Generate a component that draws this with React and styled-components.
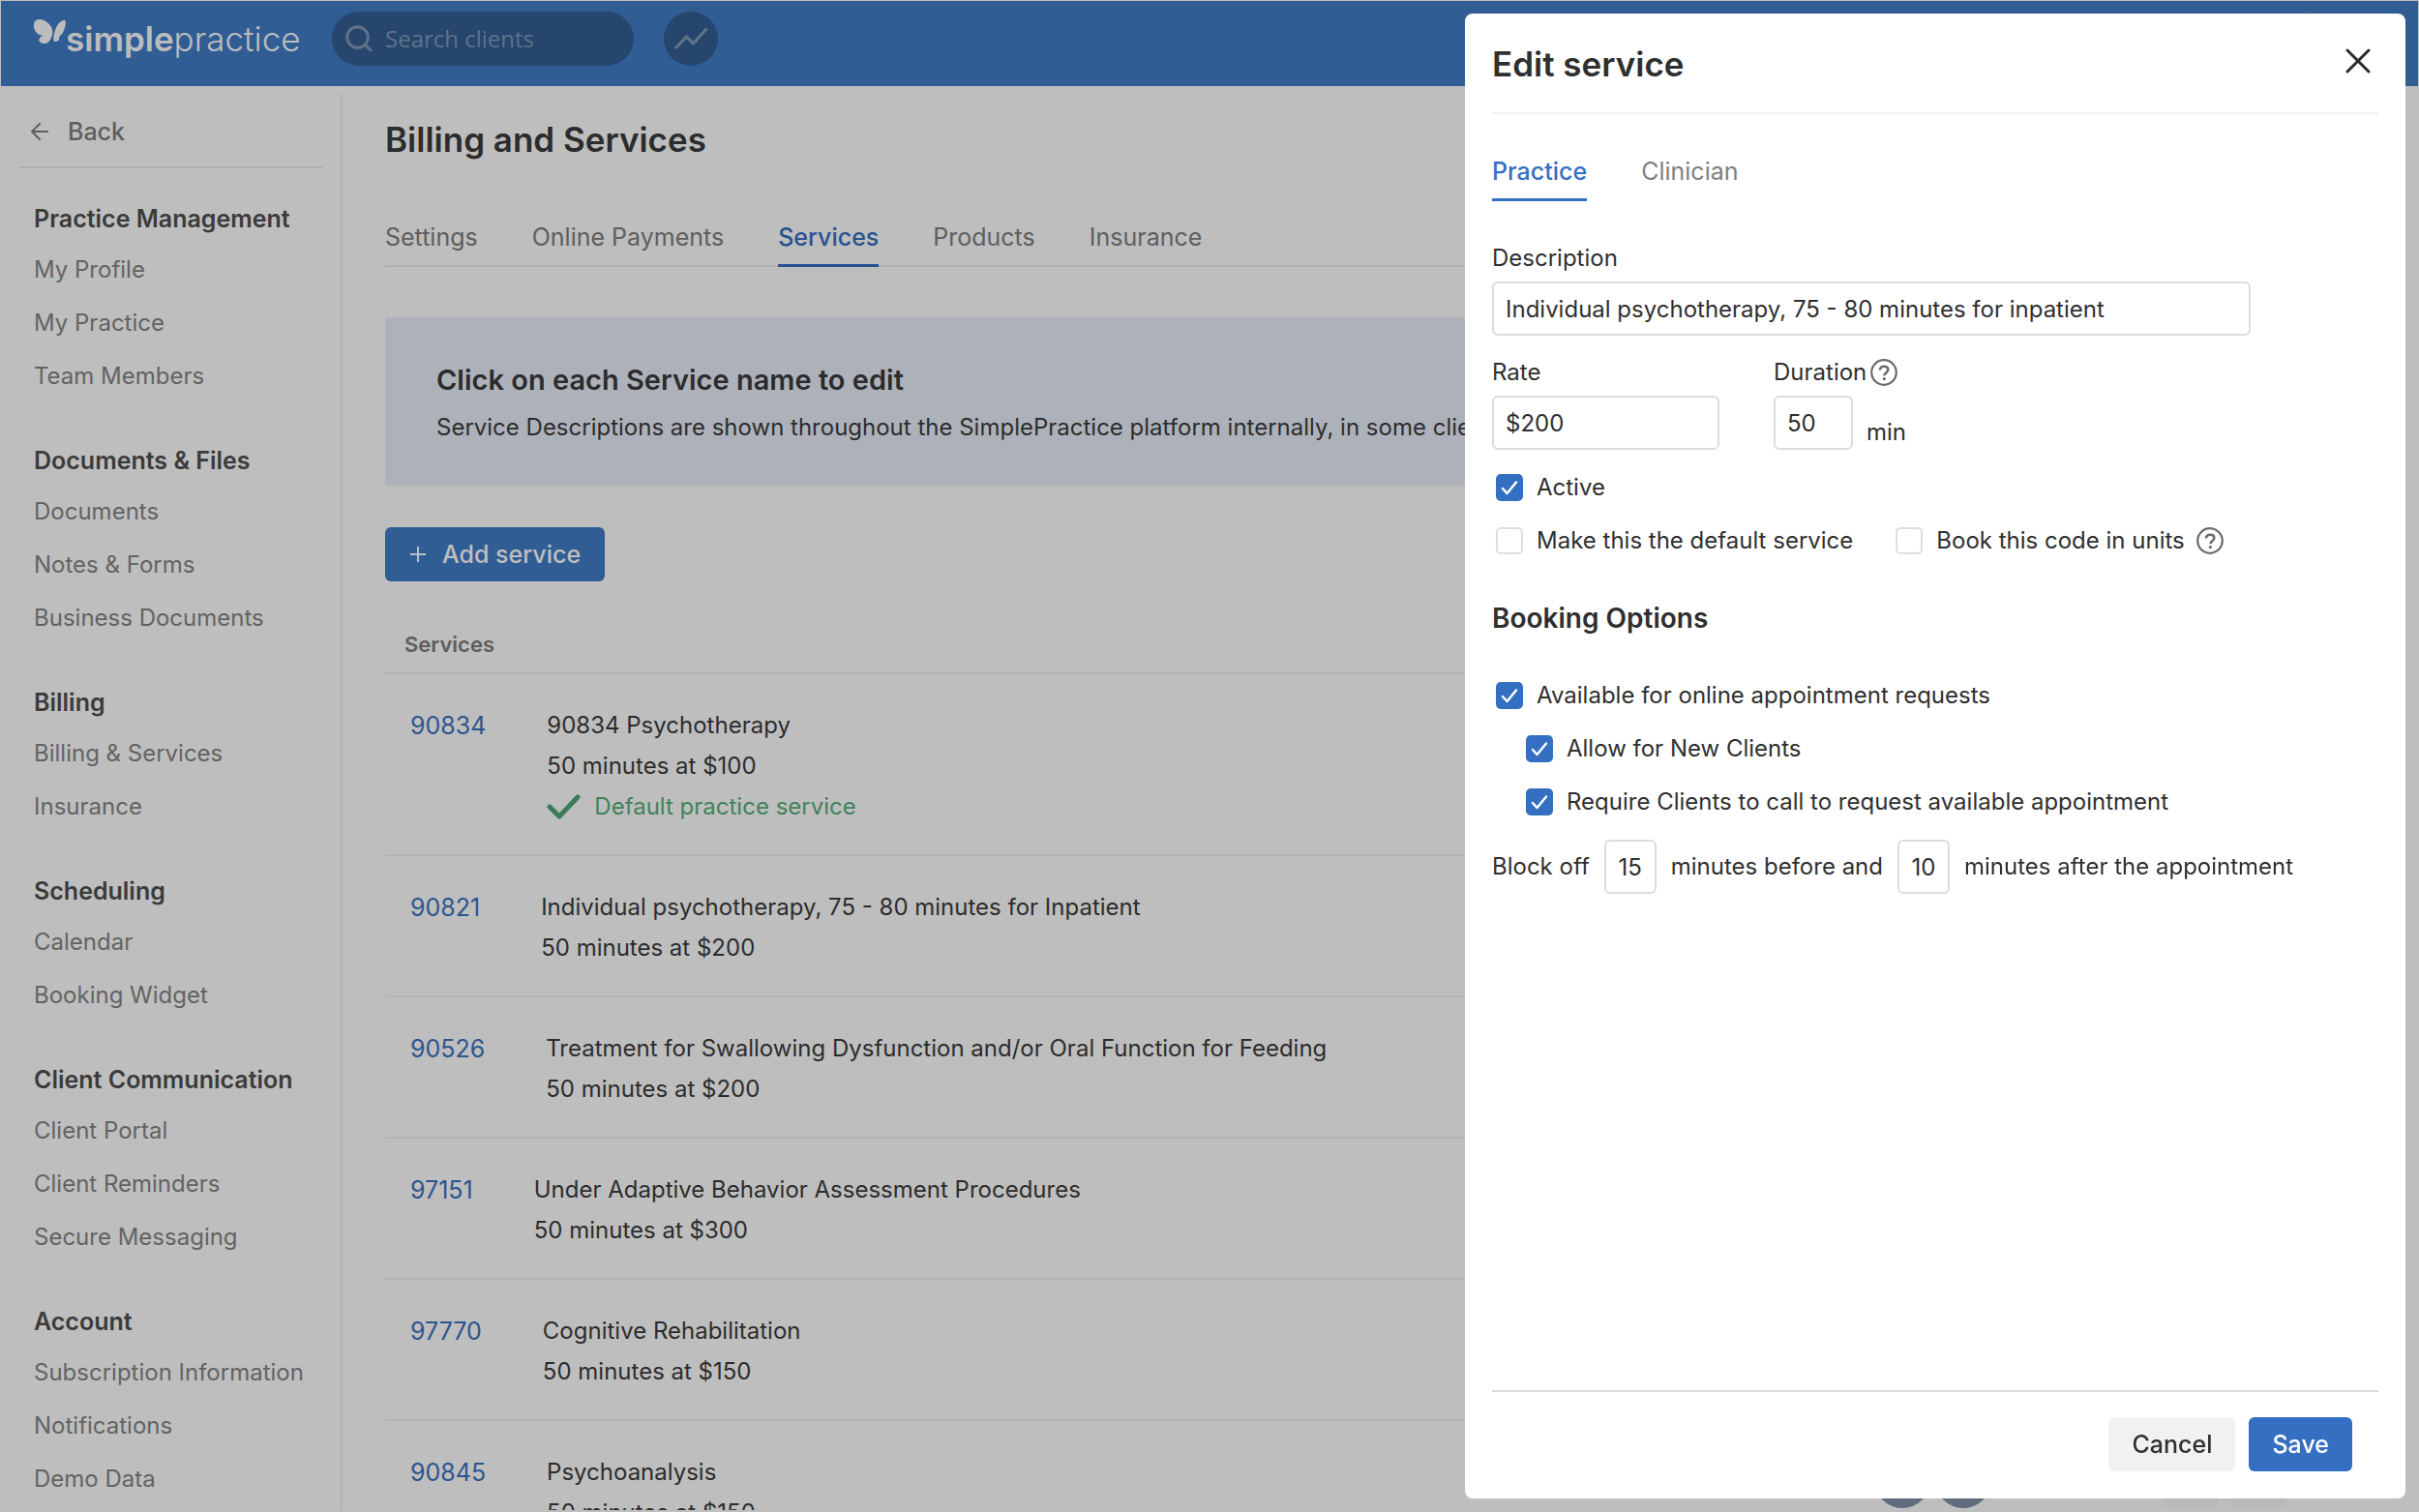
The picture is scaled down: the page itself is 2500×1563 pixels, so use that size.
import React, { useState } from 'react';
import styled, { createGlobalStyle, css } from 'styled-components';

const blue = '#356fc2';
const headerBlue = '#3f7dc7';

const GlobalStyle = createGlobalStyle`
  *, *::before, *::after {
    box-sizing: border-box;
  }

  body {
    margin: 0;
    background: #fff;
    color: #3c3c3c;
    font-family: Inter, 'Liberation Sans', sans-serif;
    font-size: 24px;
    line-height: 42px;
  }

  button, input, table {
    font: inherit;
    color: inherit;
  }

  h1, h2, h3, p, ul {
    margin: 0;
    padding: 0;
  }

  a {
    color: inherit;
    text-decoration: none;
  }
`;

const Page = styled.div`
  display: flex;
  flex-direction: column;
  height: 100vh;
  overflow: hidden;
  border: 1px solid #fff;
  border-bottom-width: 2px;
`;

const Header = styled.header`
  display: flex;
  flex: none;
  align-items: flex-start;
  gap: 31px;
  height: 88px;
  padding: 11px 112px 0 33px;
  background: ${headerBlue};
`;

const Logo = styled.a`
  display: flex;
  width: 278px;
  height: 56px;
  color: #fdfdfd;
  font-size: 35px;
  line-height: 56px;

  svg {
    flex: none;
    width: 34px;
    height: 26px;
    margin-top: 8px;
  }

  strong {
    font-weight: 600;
  }

  span {
    font-weight: 300;
  }
`;

const SearchBox = styled.label`
  display: flex;
  align-items: center;
  gap: 13px;
  width: 312px;
  height: 56px;
  padding: 0 14px;
  border-radius: 28px;
  background: #335e93;

  svg {
    flex: none;
    width: 28px;
    height: 28px;
  }

  input {
    width: 100%;
    min-width: 0;
    padding: 0;
    border: 0;
    outline: 0;
    background: none;
    font-family: 'Open Sans', sans-serif;
    font-size: 24px;
  }

  input::placeholder {
    color: #8199b8;
    opacity: 1;
  }
`;

const RoundButton = styled.button`
  display: flex;
  align-items: center;
  justify-content: center;
  width: 56px;
  height: 56px;
  padding: 0;
  border: 0;
  border-radius: 50%;
  background: #335e93;

  svg {
    width: 36px;
    height: 28px;
  }
`;

const HeaderDivider = styled.span`
  width: 1px;
  height: 56px;
  margin-left: auto;
  background: #6a98d0;
`;

const Body = styled.div`
  display: flex;
  flex: 1;
  min-height: 0;
`;

const Sidebar = styled.aside`
  flex: none;
  width: 353px;
  margin-top: 8px;
  border-right: 2px solid #efefef;
`;

const BackLink = styled.a`
  display: flex;
  align-items: center;
  gap: 20px;
  height: 77px;
  margin: 0 19px;
  padding: 2px 12px 0;
  border-bottom: 2px solid #e9e9e9;
  color: #7f7f7f;
  font-size: 25px;
  font-weight: 500;

  svg {
    width: 18px;
    height: 20px;
  }
`;

const Nav = styled.nav`
  padding: 27px 0 0 34px;
`;

const NavGroup = styled.section`
  margin-bottom: 35px;

  h2 {
    color: #505050;
    font-size: 25px;
    font-weight: 600;
    line-height: 50px;
  }

  ul {
    list-style: none;
  }

  li {
    color: #868686;
    line-height: 55px;
  }
`;

const Main = styled.main`
  flex: 1;
  min-width: 0;
  padding: 33px 44px 0;
`;

const PageTitle = styled.h1`
  font-size: 35px;
  font-weight: 600;
  line-height: 44px;
`;

const Tabs = styled.div`
  display: flex;
  gap: 56px;
  margin-bottom: 37px;

  ${({ $line }) =>
    $line &&
    css`
      margin: 50px 0 52px;
      border-bottom: 2px solid #ebebeb;
    `}
`;

const Tab = styled.button`
  height: 60px;
  margin-bottom: -2px;
  padding: 0;
  border: 0;
  border-bottom: 3px solid ${({ $active }) => ($active ? blue : 'transparent')};
  background: none;
  color: ${({ $active }) => ($active ? blue : '#808080')};
  font-size: 25px;
  font-weight: ${({ $active }) => ($active ? 500 : 400)};
`;

const Banner = styled.section`
  height: 174px;
  padding: 44px 53px;
  overflow: hidden;
  background: #e9effa;
  white-space: nowrap;

  h2 {
    font-size: 29px;
    font-weight: 600;
    line-height: 42px;
  }

  p {
    line-height: 56px;
  }
`;

const AddButton = styled.button`
  display: flex;
  align-items: center;
  gap: 16px;
  height: 56px;
  margin: 43px 0 44px;
  padding: 0 25px;
  border: 0;
  border-radius: 6px;
  background: ${headerBlue};
  color: #fff;
  font-size: 25px;
  font-weight: 500;

  svg {
    width: 18px;
    height: 18px;
  }
`;

const ServiceTable = styled.table`
  width: 100%;
  border-collapse: collapse;

  th {
    height: 51px;
    padding: 0 20px 8px;
    border-bottom: 2px solid #f1f1f1;
    color: #7d7d7d;
    font-size: 22px;
    font-weight: 600;
    line-height: 42px;
    text-align: left;
  }

  td {
    padding: 32px 26px 28px;
    border-bottom: 2px solid #f1f1f1;
  }
`;

const ServiceCell = styled.div`
  display: flex;
  gap: 63px;

  > a {
    color: #3b73bf;
    font-size: 25px;
  }
`;

const DefaultNote = styled.p`
  display: flex;
  align-items: center;
  gap: 14px;
  color: #57b07b;

  svg {
    width: 35px;
    height: 28px;
  }
`;

const Overlay = styled.div`
  position: fixed;
  inset: 0;
  background: rgba(0, 0, 0, 0.255);
`;

const HelpDock = styled.div`
  position: fixed;
  right: 139px;
  bottom: 4px;
  display: flex;
  gap: 13px;

  span {
    width: 56px;
    height: 56px;
    border-radius: 6px;
    background: #f8f8f8;
  }
`;

const PagerDock = styled(HelpDock)`
  right: 442px;
  gap: 5px;

  span {
    width: 58px;
    height: 58px;
    border-radius: 50%;
    background: #8290a5;
  }
`;

const Panel = styled.section`
  position: fixed;
  top: 14px;
  right: 14px;
  bottom: 14px;
  display: flex;
  flex-direction: column;
  width: 972px;
  padding: 0 28px;
  border-radius: 8px;
  background: #fff;
  color: #2f2f2f;
`;

const PanelHeader = styled.header`
  display: flex;
  align-items: flex-start;
  justify-content: space-between;
  height: 104px;
  padding: 30px 8px 0 0;
  border-bottom: 2px solid #f0f0f0;

  h2 {
    font-size: 35px;
    font-weight: 600;
    line-height: 44px;
  }
`;

const CloseButton = styled.button`
  display: flex;
  padding: 6px 0;
  border: 0;
  background: none;

  svg {
    width: 26px;
    height: 26px;
  }
`;

const PanelBody = styled.form`
  flex: 1;
  padding-top: 30px;
`;

const Field = styled.div`
  display: flex;
  flex-direction: column;
  align-items: flex-start;
`;

const FieldLabel = styled.label`
  line-height: 48px;
`;

const LabelRow = styled.div`
  display: flex;
  align-items: center;
  gap: ${({ $gap = 0 }) => $gap}px;
`;

const TextInput = styled.input`
  width: ${({ $width }) => $width}px;
  height: 56px;
  padding: 0 ${({ $center }) => ($center ? 0 : 12)}px;
  border: 2px solid #dcdcdc;
  border-radius: 6px;
  outline: 0;
  background: #fff;
  text-align: ${({ $center }) => ($center ? 'center' : 'left')};
`;

const FieldRow = styled.div`
  display: flex;
  gap: 56px;
  margin: 14px 0 11px;
`;

const Unit = styled.span`
  align-self: flex-end;
  margin-left: 14px;
  line-height: 36px;
`;

const CheckRow = styled.div`
  display: flex;
  align-items: center;
  gap: 44px;
  height: 55px;
  padding-left: ${({ $nested }) => ($nested ? 35 : 4)}px;
`;

const CheckLabel = styled.label`
  display: flex;
  align-items: center;
  gap: 14px;
`;

const CheckInput = styled.input`
  appearance: none;
  flex: none;
  width: 28px;
  height: 28px;
  margin: 0;
  border: 2px solid #dedede;
  border-radius: 5px;
  background: #fff;

  &:checked {
    border-color: ${blue};
    background: ${blue}
      url("data:image/svg+xml,%3Csvg xmlns='http://www.w3.org/2000/svg' viewBox='0 0 24 24' fill='none' stroke='white' stroke-width='2.4' stroke-linecap='round' stroke-linejoin='round'%3E%3Cpath d='M5 13l4.5 5L19 6.5'/%3E%3C/svg%3E")
      center / 24px no-repeat;
  }
`;

const SectionTitle = styled.h3`
  margin: 29px 0 28px;
  font-size: 28px;
  font-weight: 600;
  line-height: 48px;
`;

const BlockRow = styled.div`
  display: flex;
  align-items: center;
  gap: 15px;
  height: 56px;
  margin-top: 12px;
`;

const PanelFooter = styled.footer`
  display: flex;
  justify-content: flex-end;
  gap: 14px;
  height: 112px;
  padding: 26px 27px 0 0;
  border-top: 2px solid #dadada;
`;

const ActionButton = styled.button`
  height: 56px;
  padding: 0 24px;
  border: 0;
  border-radius: 6px;
  background: ${({ $primary }) => ($primary ? blue : '#f1f1f1')};
  color: ${({ $primary }) => ($primary ? '#fff' : '#2f2f2f')};
  font-size: 25px;
  font-weight: 500;
`;

const HelpIcon = styled.svg`
  flex: none;
  width: 28px;
  height: 28px;
`;

const Help = () => (
  <HelpIcon viewBox="0 0 28 28" fill="none" stroke="#6b6b6b" aria-hidden="true">
    <circle cx="14" cy="14" r="12.8" strokeWidth="2.2" />
    <path d="M9.9 11.6c0-2.4 1.8-3.9 4.2-3.9s4.2 1.4 4.2 3.5c0 3-3.9 3-3.9 6" strokeWidth="2.6" />
    <circle cx="14.3" cy="20.6" r="1.6" fill="#6b6b6b" stroke="none" />
  </HelpIcon>
);

const Butterfly = () => (
  <svg viewBox="0 0 34 26" fill="currentColor" aria-hidden="true">
    <path d="M5.3.2C8-.2 11.6.6 14.3 2.7c3.5 2.6 5.6 5.6 6 9 .2 2.6.1 4.6-1 6.600-1.2 3.6-3.3 6.300-6.600 6.600-2.400.2-4.700-.6-6-2.200-1.200-1.700.8-4.900 4.300-6.100-3 .3-6-.8-7.700-3.300C1.6 11 .6 8 1 5 1.3 2.3 2.6.6 5.3.2Z" />
    <path d="M33 .9c1.2.5 1 3.6.5 5.8-.8 3.6-2.200 7-4.200 9.300-1.200.6-1.800 1.200-2 2.300-.2 1.800-.4 3.200-1.300 4-1.200.9-3.200 1.100-4.300.4-.6-2.300-.5-4.800.3-7.700.9-4 2-7.200 4-10C28 2.9 30.8.4 33 .9Z" />
  </svg>
);

const navGroups = [
  { title: 'Practice Management', items: ['My Profile', 'My Practice', 'Team Members'] },
  { title: 'Documents & Files', items: ['Documents', 'Notes & Forms', 'Business Documents'] },
  { title: 'Billing', items: ['Billing & Services', 'Insurance'] },
  { title: 'Scheduling', items: ['Calendar', 'Booking Widget'] },
  { title: 'Client Communication', items: ['Client Portal', 'Client Reminders', 'Secure Messaging'] },
  { title: 'Account', items: ['Subscription Information', 'Notifications', 'Demo Data'] },
];

const pageTabs = ['Settings', 'Online Payments', 'Services', 'Products', 'Insurance'];

const services = [
  { code: '90834', name: '90834 Psychotherapy', price: '50 minutes at $100', isDefault: true },
  { code: '90821', name: 'Individual psychotherapy, 75 - 80 minutes for Inpatient', price: '50 minutes at $200' },
  {
    code: '90526',
    name: 'Treatment for Swallowing Dysfunction and/or Oral Function for Feeding',
    price: '50 minutes at $200',
  },
  { code: '97151', name: 'Under Adaptive Behavior Assessment Procedures', price: '50 minutes at $300' },
  { code: '97770', name: 'Cognitive Rehabilitation', price: '50 minutes at $150' },
  { code: '90845', name: 'Psychoanalysis', price: '50 minutes at $150' },
];

const Checkbox = ({ label, checked = false }) => (
  <CheckLabel>
    <CheckInput type="checkbox" defaultChecked={checked} />
    {label}
  </CheckLabel>
);

const TopBar = () => (
  <Header>
    <Logo href="#home" aria-label="simplepractice">
      <Butterfly />
      <strong>simple</strong>
      <span>practice</span>
    </Logo>
    <SearchBox>
      <svg viewBox="0 0 28 28" fill="none" stroke="#8199b8" strokeWidth="3" strokeLinecap="round">
        <circle cx="12.5" cy="12.5" r="10.8" />
        <path d="M20.5 20.5l5.5 5.5" />
      </svg>
      <input type="text" placeholder="Search clients" aria-label="Search clients" />
    </SearchBox>
    <RoundButton type="button" aria-label="Analytics">
      <svg viewBox="0 0 36 28" fill="none" stroke="#8199b8" strokeWidth="3.2">
        <path d="M2 24l11.5-12 7 7L34.5 3.5" />
      </svg>
    </RoundButton>
    <HeaderDivider />
  </Header>
);

const SideNav = () => (
  <Sidebar>
    <BackLink href="#back">
      <svg viewBox="0 0 18 20" fill="none" stroke="currentColor" strokeWidth="2" strokeLinecap="round" strokeLinejoin="round">
        <path d="M17 10H2M9 2l-8 8 8 8" />
      </svg>
      Back
    </BackLink>
    <Nav>
      {navGroups.map(({ title, items }) => (
        <NavGroup key={title}>
          <h2>{title}</h2>
          <ul>
            {items.map(item => (
              <li key={item}>
                <a href="#nav">{item}</a>
              </li>
            ))}
          </ul>
        </NavGroup>
      ))}
    </Nav>
  </Sidebar>
);

const ServiceRow = ({ code, name, price, isDefault }) => (
  <tr>
    <td>
      <ServiceCell>
        <a href={`#${code}`}>{code}</a>
        <div>
          <p>{name}</p>
          <p>{price}</p>
          {isDefault && (
            <DefaultNote>
              <svg viewBox="0 0 35 28" fill="none" stroke="#4fa877" strokeWidth="5" strokeLinecap="round" strokeLinejoin="round">
                <path d="M3 14l10 10L32 4" />
              </svg>
              Default practice service
            </DefaultNote>
          )}
        </div>
      </ServiceCell>
    </td>
  </tr>
);

const EditPanel = () => {
  const [tab, setTab] = useState('Practice');

  return (
    <Panel role="dialog" aria-label="Edit service">
      <PanelHeader>
        <h2>Edit service</h2>
        <CloseButton type="button" aria-label="Close">
          <svg viewBox="0 0 26 26" fill="none" stroke="#2a2a2a" strokeWidth="3" strokeLinecap="round">
            <path d="M2 2l22 22M24 2L2 24" />
          </svg>
        </CloseButton>
      </PanelHeader>
      <PanelBody>
        <Tabs>
          {['Practice', 'Clinician'].map(name => (
            <Tab key={name} type="button" $active={tab === name} onClick={() => setTab(name)}>
              {name}
            </Tab>
          ))}
        </Tabs>
        <FieldRow>
          <Field>
            <FieldLabel htmlFor="description">Description</FieldLabel>
            <TextInput
              id="description"
              type="text"
              $width={784}
              defaultValue="Individual psychotherapy, 75 - 80 minutes for inpatient"
            />
          </Field>
        </FieldRow>
        <FieldRow>
          <Field>
            <FieldLabel htmlFor="rate">Rate</FieldLabel>
            <TextInput id="rate" type="text" $width={235} defaultValue="$200" />
          </Field>
          <Field>
            <LabelRow $gap={4}>
              <FieldLabel htmlFor="duration">Duration</FieldLabel>
              <Help />
            </LabelRow>
            <LabelRow>
              <TextInput id="duration" type="text" $width={82} defaultValue="50" />
              <Unit>min</Unit>
            </LabelRow>
          </Field>
        </FieldRow>
        <CheckRow>
          <Checkbox label="Active" checked />
        </CheckRow>
        <CheckRow>
          <Checkbox label="Make this the default service" />
          <LabelRow $gap={12}>
            <Checkbox label="Book this code in units" />
            <Help />
          </LabelRow>
        </CheckRow>
        <SectionTitle>Booking Options</SectionTitle>
        <CheckRow>
          <Checkbox label="Available for online appointment requests" checked />
        </CheckRow>
        <CheckRow $nested>
          <Checkbox label="Allow for New Clients" checked />
        </CheckRow>
        <CheckRow $nested>
          <Checkbox label="Require Clients to call to request available appointment" checked />
        </CheckRow>
        <BlockRow>
          <label htmlFor="before">Block off</label>
          <TextInput id="before" type="text" $width={54} $center defaultValue="15" />
          <label htmlFor="after">minutes before and</label>
          <TextInput id="after" type="text" $width={54} $center defaultValue="10" />
          <span>minutes after the appointment</span>
        </BlockRow>
      </PanelBody>
      <PanelFooter>
        <ActionButton type="button">Cancel</ActionButton>
        <ActionButton type="button" $primary>
          Save
        </ActionButton>
      </PanelFooter>
    </Panel>
  );
};

const App = () => (
  <>
    <GlobalStyle />
    <Page>
      <TopBar />
      <Body>
        <SideNav />
        <Main>
          <PageTitle>Billing and Services</PageTitle>
          <Tabs $line>
            {pageTabs.map(name => (
              <Tab key={name} type="button" $active={name === 'Services'}>
                {name}
              </Tab>
            ))}
          </Tabs>
          <Banner>
            <h2>Click on each Service name to edit</h2>
            <p>Service Descriptions are shown throughout the SimplePractice platform internally, in some clie</p>
          </Banner>
          <AddButton type="button">
            <svg viewBox="0 0 18 18" fill="none" stroke="currentColor" strokeWidth="2">
              <path d="M9 1v16M1 9h16" />
            </svg>
            Add service
          </AddButton>
          <ServiceTable>
            <thead>
              <tr>
                <th scope="col">Services</th>
              </tr>
            </thead>
            <tbody>
              {services.map(service => (
                <ServiceRow key={service.code} {...service} />
              ))}
            </tbody>
          </ServiceTable>
        </Main>
      </Body>
      <PagerDock>
        <span />
        <span />
      </PagerDock>
      <HelpDock>
        <span />
        <span />
      </HelpDock>
    </Page>
    <Overlay />
    <EditPanel />
  </>
);

export default App;
